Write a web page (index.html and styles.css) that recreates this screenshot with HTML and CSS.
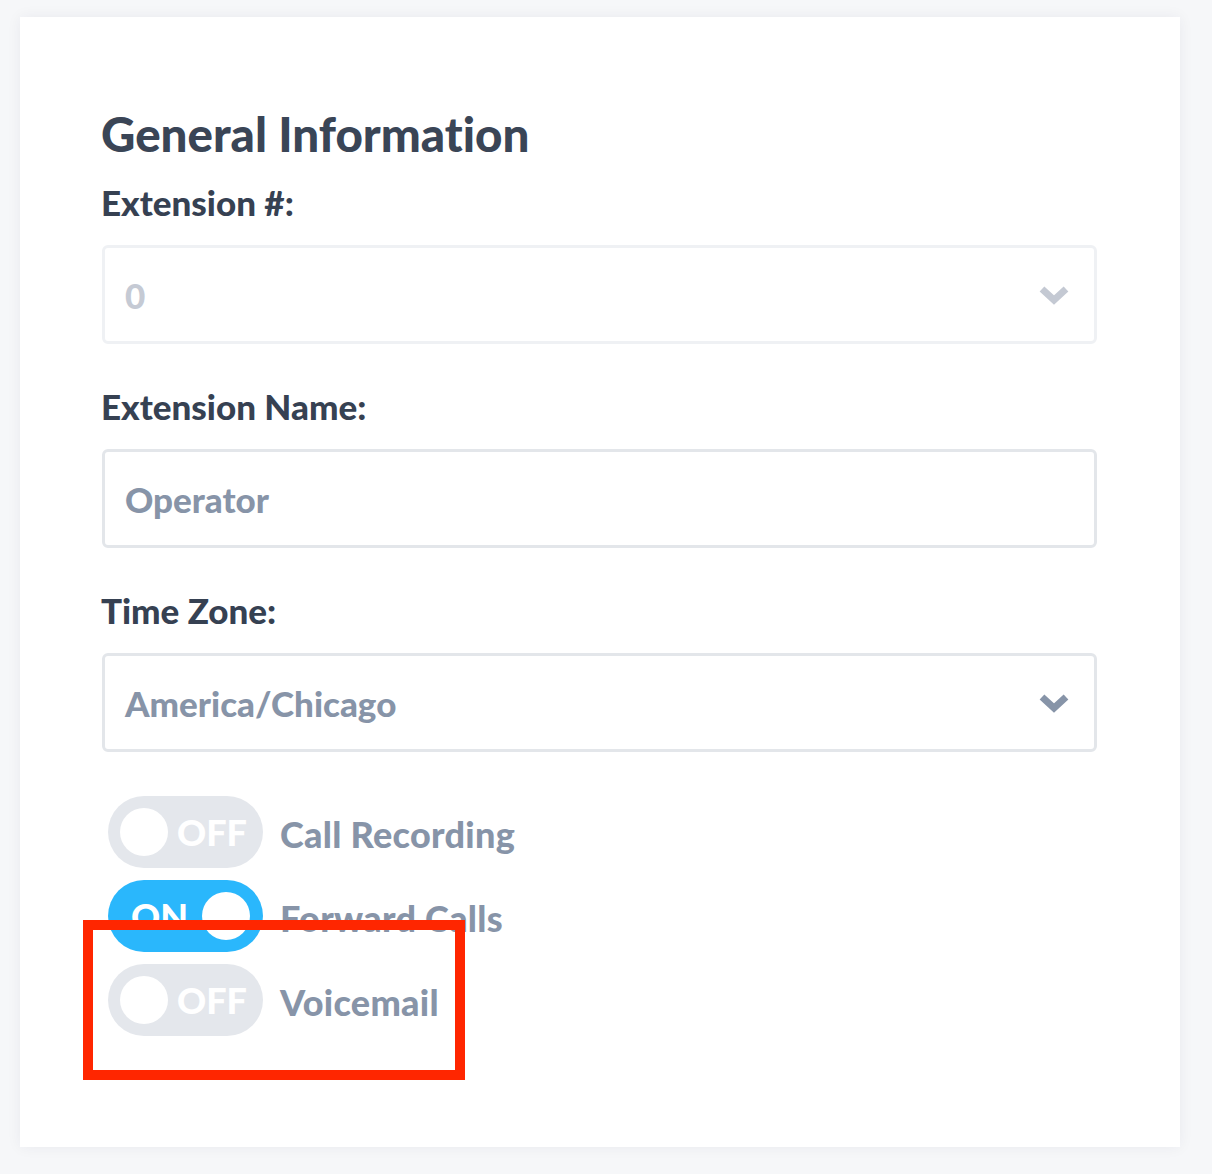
FILE: index.html
```html
<!DOCTYPE html>
<html lang="en">
<head>
<meta charset="utf-8">
<title>General Information</title>
<link rel="stylesheet" href="styles.css">
</head>
<body>
<main class="card">
  <h1 class="title">General Information</h1>

  <label class="label">Extension #:</label>
  <div class="field field-disabled">
    <span class="value value-disabled">0</span>
    <svg class="chev" width="32" height="22" viewBox="0 0 32 22"><polyline points="4,5 16,16 28,5" fill="none" stroke="#c4c9d3" stroke-width="7"/></svg>
  </div>

  <label class="label label-gap">Extension Name:</label>
  <div class="field">
    <span class="value">Operator</span>
  </div>

  <label class="label label-gap">Time Zone:</label>
  <div class="field">
    <span class="value">America/Chicago</span>
    <svg class="chev" width="32" height="22" viewBox="0 0 32 22"><polyline points="4,5 16,16 28,5" fill="none" stroke="#8794a8" stroke-width="7"/></svg>
  </div>

  <div class="toggles">
    <div class="toggle-row">
      <div class="toggle off"><span class="knob"></span><span class="state">OFF</span></div>
      <span class="toggle-label">Call Recording</span>
    </div>
    <div class="toggle-row">
      <div class="toggle on"><span class="state">ON</span><span class="knob"></span></div>
      <span class="toggle-label">Forward Calls</span>
    </div>
    <div class="toggle-row">
      <div class="toggle off"><span class="knob"></span><span class="state">OFF</span></div>
      <span class="toggle-label">Voicemail</span>
    </div>
  </div>
</main>
<div class="highlight"></div>
</body>
</html>
```

FILE: styles.css
```css
html, body {
  margin: 0;
  padding: 0;
}
body {
  background: #f6f7f9;
  font-family: Lato, "Open Sans", "Liberation Sans", sans-serif;
  font-variant-ligatures: none;
  padding: 17px 32px 27px 20px;
  position: relative;
  min-height: 1130px;
}
.card {
  width: 1160px;
  height: 1130px;
  box-sizing: border-box;
  background: #ffffff;
  box-shadow: 0 0 14px rgba(30, 40, 60, 0.06);
  padding: 89px 83px 0 82px;
  display: flex;
  flex-direction: column;
}
.title {
  margin: 0 0 0 -1px;
  font-size: 47.5px;
  line-height: 56px;
  font-weight: 900;
  color: #3a4556;
}
.label {
  display: block;
  margin-top: 20px;
  margin-left: -1px;
  font-size: 35px;
  line-height: 40px;
  font-weight: 900;
  color: #364152;
}
.label-gap {
  margin-top: 42px;
}
.field {
  margin-top: 23px;
  height: 99px;
  box-sizing: border-box;
  border: 3px solid #e3e6ea;
  border-radius: 6px;
  display: flex;
  align-items: center;
  justify-content: space-between;
  padding: 0 24px 0 20px;
}
.field-disabled {
  border-color: #eff1f4;
}
.value {
  font-size: 35px;
  font-weight: 900;
  color: #8794a8;
}
.value-disabled {
  color: #c5cad4;
}
.chev {
  display: block;
}
.toggles {
  margin-top: 44px;
  display: flex;
  flex-direction: column;
  gap: 12px;
  padding-left: 6px;
}
.toggle-row {
  display: flex;
  align-items: center;
  gap: 17px;
}
.toggle {
  width: 155px;
  height: 72px;
  border-radius: 36px;
  box-sizing: border-box;
  display: flex;
  align-items: center;
}
.toggle.off {
  background: #e4e7ec;
  padding-left: 12px;
}
.toggle.on {
  background: #2ab7fc;
  padding-left: 23px;
  padding-right: 13px;
  justify-content: space-between;
}
.knob {
  width: 48px;
  height: 48px;
  border-radius: 50%;
  background: #ffffff;
}
.state {
  color: #ffffff;
  font-size: 36px;
  font-weight: 900;
  line-height: 1;
}
.toggle.off .state {
  margin-left: 9px;
}
.toggle-label {
  font-size: 36px;
  font-weight: 900;
  color: #8794a8;
  letter-spacing: 0.3px;
  margin-top: 4px;
}
.highlight {
  position: absolute;
  left: 83px;
  top: 920px;
  width: 382px;
  height: 160px;
  box-sizing: border-box;
  border: 10px solid #ff2600;
}
```
